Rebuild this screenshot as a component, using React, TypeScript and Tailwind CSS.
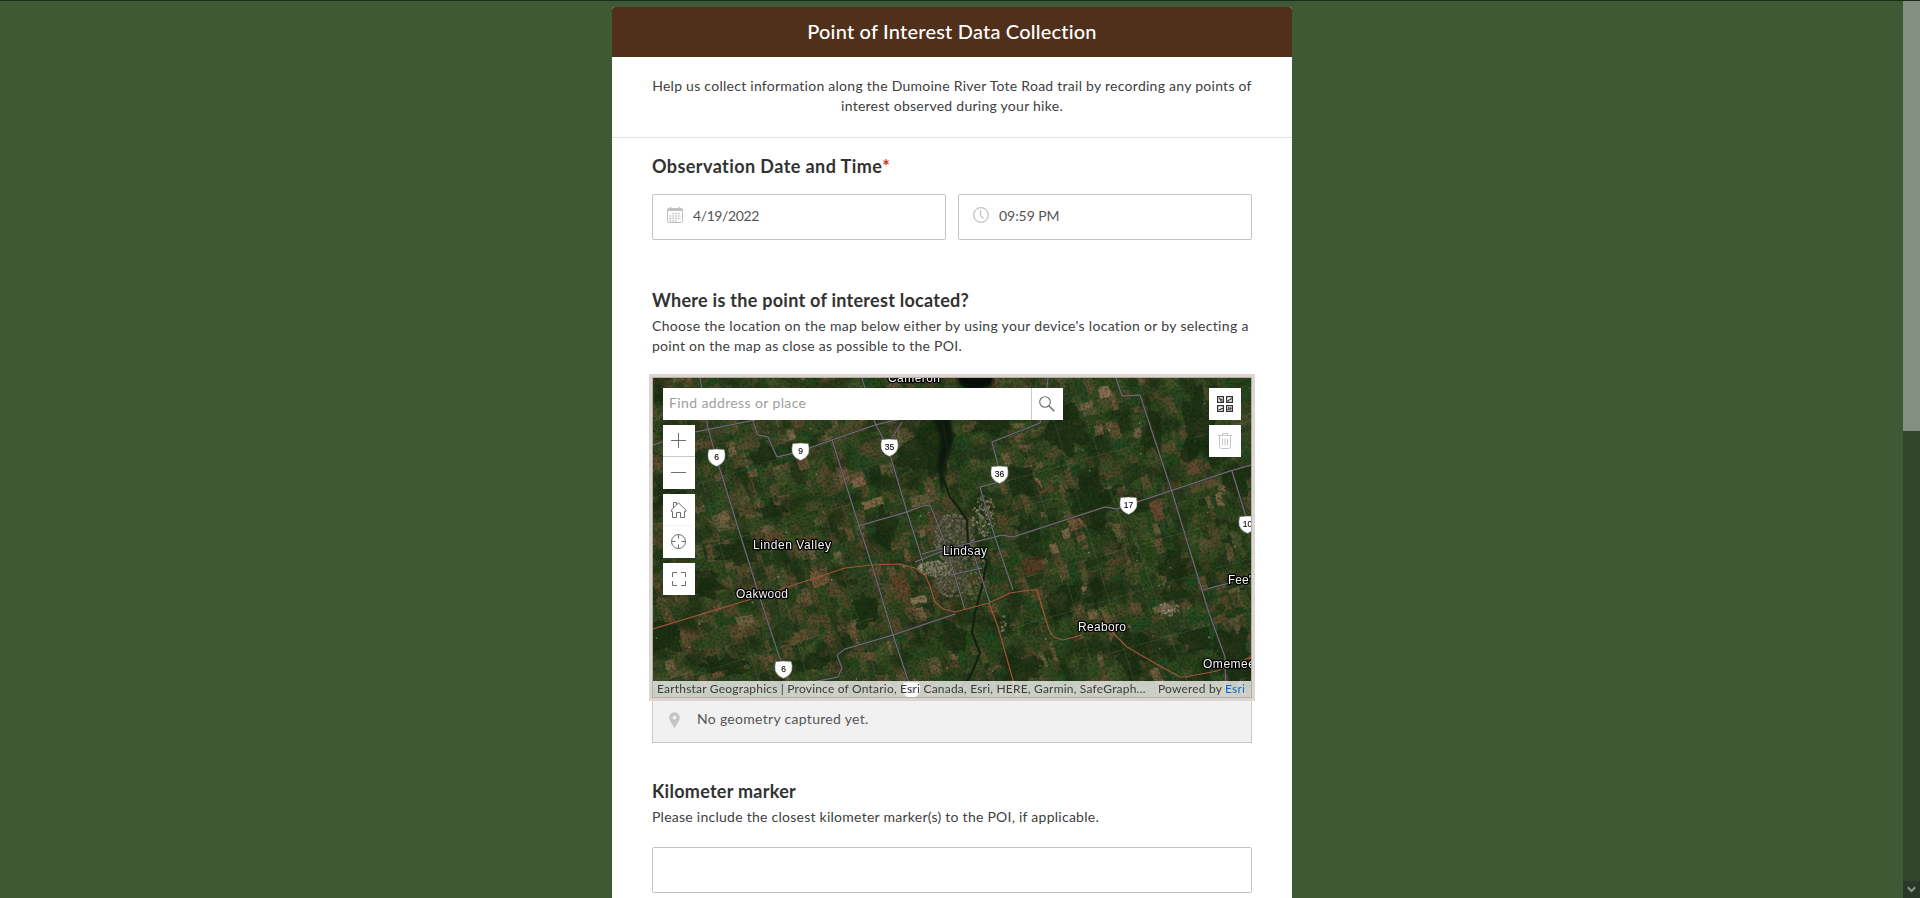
import type { ReactNode } from "react";

const MAP_W = 598;
const MAP_H = 319;

function createRandom(seed: number) {
  let s = seed;
  return () => {
    s = (s * 1664525 + 1013904223) % 4294967296;
    return s / 4294967296;
  };
}

type Patch = { d: string; fill: string; opacity: number };

const GREENS = ["#253a1c", "#2c451c", "#334f20", "#244719", "#3d4f26", "#44552a", "#1e3316", "#30421f", "#1e4a21", "#384a24"];
const BROWNS = ["#5d4a2d", "#6a5337", "#53472a", "#72583c", "#605131", "#624930"];
const TANS = ["#84694b", "#8c7051", "#7b6546"];

function buildFields(): Patch[] {
  const rand = createRandom(20417);
  const pick = (list: string[]) => list[Math.floor(rand() * list.length)];
  const patches: Patch[] = [];
  const blockW = 30;
  const blockH = 25;
  for (let by = -200; by < 520; by += blockH) {
    for (let bx = -120; bx < 720; bx += blockW) {
      const vertical = rand() > 0.35;
      let pos = 0;
      const span = vertical ? blockW : blockH;
      while (pos < span) {
        const size = 4 + rand() * 8;
        let along = 0;
        const length = vertical ? blockH : blockW;
        while (along < length) {
          const step = 6 + rand() * 15;
          const x = bx + (vertical ? pos : along);
          const y = by + (vertical ? along : pos);
          const w = Math.min(vertical ? size : step, blockW);
          const h = Math.min(vertical ? step : size, blockH);
          const worldX = x * 0.956 + y * 0.292;
          const brownShare = worldX < 300 ? 0.36 : 0.25;
          const r = rand();
          if (r < 0.92) {
            const fill = r < 0.05 ? pick(TANS) : r < brownShare ? pick(BROWNS) : pick(GREENS);
            const j = () => (rand() - 0.5) * 1.8;
            patches.push({
              d: `M${(x + j()).toFixed(1)} ${(y + j()).toFixed(1)}L${(x + w + j()).toFixed(1)} ${(y + j()).toFixed(1)}L${(x + w + j()).toFixed(1)} ${(y + h + j()).toFixed(1)}L${(x + j()).toFixed(1)} ${(y + h + j()).toFixed(1)}Z`,
              fill,
              opacity: 0.35 + rand() * 0.5,
            });
          }
          along += step;
        }
        pos += size;
      }
    }
  }
  return patches;
}

function buildBlob(cx: number, cy: number, rx: number, ry: number, seed: number) {
  const rand = createRandom(seed);
  const pts: string[] = [];
  for (let i = 0; i < 18; i++) {
    const a = (i / 18) * Math.PI * 2;
    const k = 0.5 + rand() * 0.65;
    pts.push(`${(cx + Math.cos(a) * rx * k).toFixed(1)},${(cy + Math.sin(a) * ry * k).toFixed(1)}`);
  }
  return pts.join(" ");
}

const FORESTS: [number, number, number, number][] = [
  [284, 68, 20, 34], [262, 78, 22, 20], [110, 79, 22, 12], [15, 109, 22, 14], [86, 175, 26, 15], [51, 205, 24, 16],
  [12, 259, 22, 20], [212, 232, 15, 20], [232, 150, 14, 24], [368, 102, 20, 24], [376, 155, 15, 18], [439, 122, 30, 32],
  [545, 48, 22, 46], [500, 55, 14, 24], [478, 275, 22, 24], [368, 290, 26, 16], [521, 189, 16, 24], [582, 275, 20, 34],
  [415, 52, 22, 26], [160, 285, 20, 10], [70, 288, 26, 12], [30, 20, 28, 12], [410, 222, 16, 22], [300, 260, 16, 20],
  [585, 100, 16, 18], [120, 132, 18, 10], [340, 40, 26, 22], [440, 215, 10, 16], [545, 262, 20, 14],
];

const DIRT: [number, number, number, number, string][] = [
  [247, 208, 12, 18, "#60442a"], [220, 125, 16, 6, "#8d6e4a"], [167, 200, 13, 12, "#7b5a3c"], [205, 105, 10, 6, "#87694c"],
  [380, 187, 14, 12, "#593c27"], [427, 145, 16, 8, "#7c5b3e"], [452, 14, 9, 8, "#94745a"], [383, 106, 6, 8, "#86654a"],
  [540, 88, 9, 12, "#6b4c33"], [504, 132, 8, 14, "#704a34"], [435, 213, 8, 7, "#8b6f55"], [405, 220, 12, 7, "#7c6247"],
  [515, 230, 10, 8, "#897158"], [195, 250, 14, 10, "#755a40"], [92, 243, 12, 8, "#75643f"], [130, 130, 9, 12, "#695039"],
  [150, 85, 8, 10, "#6d4e38"], [100, 95, 7, 6, "#755b3e"], [190, 95, 7, 10, "#7a5c47"], [265, 222, 11, 5, "#917c5b"],
];

const ROADS = [
  "M47 0 55 50 63 79 107 220 125 275 135 302 140 319",
  "M209 0 222 45 235 70 254 134 270 184",
  "M179 62 205 145 219 187 240 257 255 302 261 319",
  "M0 67 42 54 102 42",
  "M95 30 102 49 105 57 115 59 124 79 145 74 179 62 222 47 252 40",
  "M205 148 254 134 269 128 277 127 282 139 292 165 312 232",
  "M239 60 249 44",
  "M150 306 185 299 189 290 184 277 192 271 240 257 302 236",
  "M395 0 394 9 387 45 339 64 345 87 346 104 327 109 329 117 342 159 360 212",
  "M262 184 297 170 342 159 348 157 360 159 452 129 464 131 475 127 577 93 598 87",
  "M463 0 469 18 487 17 519 114 555 232 572 279 573 319",
  "M579 93 593 139",
  "M550 212 580 204",
  "M317 165 337 225",
  "M297 197 329 190",
  "M269 176 297 168",
];

const MINOR_ROADS = [
  "M20 0 110 319", "M78 30 160 319", "M150 70 230 319", "M370 60 440 290", "M400 40 480 300", "M430 30 500 240",
  "M350 104 480 68", "M0 120 180 64", "M0 185 205 124", "M0 310 220 240", "M370 200 560 146", "M360 250 598 180",
  "M470 130 540 319", "M540 60 598 42", "M440 280 598 235", "M330 140 400 120",
];

const RED_ROADS = [
  "M0 251 92 223 165 199 192 190 219 187 245 186 262 190 272 197 277 208 282 224 290 231 302 234 336 225 357 215 377 212 384 212 389 229 396 252 401 259 410 262 429 257",
  "M459 254 474 269 500 284 527 299 532 299 564 293 598 279",
  "M336 225 345 249 360 302 364 319",
];

const SHIELDS: [number, number, string][] = [
  [63, 79, "6"], [147, 73, "9"], [236, 69, "35"], [346, 96, "36"], [475, 127, "17"], [594, 146, "10"], [130, 291, "6"], [258, 312, "6"],
];

const PLACES: [number, number, string, number][] = [
  [235, 4, "Cameron", 52], [100, 171, "Linden Valley", 78], [290, 177, "Lindsay", 44], [83, 220, "Oakwood", 52],
  [425, 253, "Reaboro", 48], [575, 206, "Fee's", 29], [550, 290, "Omemee", 52],
];

function buildTown() {
  const rand = createRandom(77);
  const dots: { x: number; y: number; s: number; fill: string; o: number }[] = [];
  const clusters: [number, number, number, number, number, boolean][] = [
    [300, 160, 20, 26, 520, false], [330, 137, 12, 21, 170, true], [282, 190, 19, 8, 240, true], [298, 203, 18, 15, 220, false],
    [320, 195, 15, 28, 120, false], [350, 247, 4, 14, 18, true], [515, 230, 10, 8, 40, true],
  ];
  const muted = ["#77735e", "#666451", "#85806c", "#585845", "#6c6755"];
  const bright = ["#a39c88", "#877f6c", "#b9b09d", "#6f6856", "#938975"];
  clusters.forEach(([cx, cy, rx, ry, n, isBright]) => {
    for (let i = 0; i < n; i++) {
      const a = rand() * Math.PI * 2;
      const k = Math.sqrt(rand());
      const shades = isBright ? bright : muted;
      dots.push({ x: cx + Math.cos(a) * rx * k, y: cy + Math.sin(a) * ry * k, s: 1 + rand() * 1.4, fill: shades[Math.floor(rand() * 5)], o: 0.4 + rand() * 0.4 });
    }
  });
  for (let i = 0; i < 120; i++) {
    dots.push({ x: rand() * MAP_W, y: rand() * MAP_H, s: 0.8 + rand() * 0.8, fill: "#a8a888", o: 0.45 + rand() * 0.35 });
  }
  return dots;
}

const fields = buildFields();
const town = buildTown();

function SatelliteMap() {
  return (
    <svg className="block h-full w-full" viewBox={`0 0 ${MAP_W} ${MAP_H}`} preserveAspectRatio="none">
      <defs>
        <filter id="soft" x="-20%" y="-20%" width="140%" height="140%" colorInterpolationFilters="sRGB">
          <feGaussianBlur stdDeviation="1.6" />
        </filter>
        <filter id="warp" x="0" y="0" width="100%" height="100%" colorInterpolationFilters="sRGB">
          <feTurbulence type="fractalNoise" baseFrequency="0.07" numOctaves="2" seed="4" />
          <feDisplacementMap in="SourceGraphic" scale="5" xChannelSelector="R" yChannelSelector="G" result="w" />
          <feGaussianBlur in="w" stdDeviation="0.35" />
        </filter>
        <filter id="shade" x="0" y="0" width="100%" height="100%" colorInterpolationFilters="sRGB">
          <feTurbulence type="fractalNoise" baseFrequency="0.035" numOctaves="5" seed="11" />
          <feColorMatrix values="0 0 0 0 0.09  0 0 0 0 0.17  0 0 0 0 0.06  5 0 0 0 -2.6" />
          <feComponentTransfer><feFuncA type="linear" slope="0.6" /></feComponentTransfer>
        </filter>
        <filter id="grain" x="0" y="0" width="100%" height="100%" colorInterpolationFilters="sRGB">
          <feTurbulence type="fractalNoise" baseFrequency="0.4" numOctaves="2" seed="2" />
          <feColorMatrix values="0 0 0 0 0.05  0 0 0 0 0.09  0 0 0 0 0.03  0 1.1 0 0 -0.45" />
        </filter>
      </defs>
      <rect width={MAP_W} height={MAP_H} fill="#324522" />
      <g filter="url(#warp)">
        <rect width={MAP_W} height={MAP_H} fill="#324522" />
        <g transform="rotate(-17)">
          {fields.map((f, i) => (
            <path key={i} d={f.d} fill={f.fill} opacity={f.opacity} />
          ))}
        </g>
        {DIRT.map(([x, y, rx, ry, fill], i) => (
          <rect key={i} x={x - rx * 0.7} y={y - ry * 0.7} width={rx * 1.4} height={ry * 1.4} fill={fill} opacity="0.85" transform={`rotate(-17 ${x} ${y})`} />
        ))}
        {FORESTS.map(([x, y, rx, ry], i) => (
          <polygon key={i} points={buildBlob(x, y, rx, ry, 31 + i * 17)} fill="#192d12" opacity="0.75" />
        ))}
      </g>
      <rect width={MAP_W} height={MAP_H} filter="url(#shade)" />
      <g filter="url(#soft)">
        <path d="M304 -4H341L338 8 318 14 306 6Z" fill="#060d0b" />
        <path d="M280 40H298L300 62 292 90 290 120 284 90 288 62Z" fill="#0a160d" opacity=".9" />
        <ellipse cx="302" cy="160" rx="20" ry="26" fill="#4b4a38" opacity=".75" />
        <ellipse cx="298" cy="199" rx="20" ry="15" fill="#524c39" opacity=".6" />
      </g>
      {MINOR_ROADS.map((d) => (
        <path key={d} d={d} fill="none" stroke="#7c8467" strokeWidth=".5" opacity=".5" />
      ))}
      {town.map((t, i) => (
        <rect key={i} x={t.x} y={t.y} width={t.s} height={t.s} fill={t.fill} opacity={t.o} />
      ))}
      <path d="M290 45 295 75 288 95 297 119 305 129 314 142 315 167 334 182 329 209 322 235 319 255 327 275 317 299 300 319" fill="none" stroke="#14230f" strokeWidth="2.200" strokeLinejoin="round" />
      <rect width={MAP_W} height={MAP_H} filter="url(#grain)" />
      {ROADS.map((d) => (
        <path key={d} d={d} fill="none" stroke="#3a393a" strokeWidth="2" strokeLinejoin="round" />
      ))}
      {ROADS.map((d) => (
        <path key={d} d={d} fill="none" stroke="#7a7878" strokeWidth=".9" strokeLinejoin="round" />
      ))}
      {RED_ROADS.map((d) => (
        <path key={d} d={d} fill="none" stroke="#a3543a" strokeWidth="1.200" strokeLinejoin="round" />
      ))}
      {SHIELDS.map(([x, y, label], i) => (
        <g key={i} transform={`translate(${x + 0.5} ${y + 0.5})`}>
          <path d="M-8 -8Q0 -9.200 8 -8Q9.200 -3 8.400 1.500Q6 7 0 9Q-6 7 -8.400 1.500Q-9.200 -3 -8 -8Z" fill="#fff" stroke="#56594e" strokeWidth=".6" />
          <text y="2.300" textAnchor="middle" fontSize="8.500" fontFamily="Liberation Sans, sans-serif" fill="#111" stroke="#111" strokeWidth=".15">{label}</text>
        </g>
      ))}
      {PLACES.map(([x, y, name, w]) => (
        <text key={name} x={x} y={y} textLength={w} fontSize="12" fontFamily="Liberation Sans, sans-serif" fill="#f4f4f4" stroke="#000" strokeWidth="2.600" strokeLinejoin="round" paintOrder="stroke">{name}</text>
      ))}
    </svg>
  );
}

function MapButton({ children, className = "" }: { children: ReactNode; className?: string }) {
  return <button className={`flex h-8 w-8 items-center justify-center bg-white text-[#6e6e6e] ${className}`}>{children}</button>;
}

const line = { fill: "none", stroke: "currentColor", strokeWidth: 1 };

function PlusIcon() {
  return <svg className="size-4" viewBox="0 0 16 16" {...line}><path d="M0 7.500H15M7.500 0V15" /></svg>;
}
function MinusIcon() {
  return <svg className="size-4" viewBox="0 0 16 16" {...line}><path d="M0 7.500H15" /></svg>;
}
function HomeIcon() {
  return <svg className="size-4" viewBox="0 0 16 16" {...line}><path d="M2.500 6V.5H5.500V3M.5 8 7.500.9 14.800 8V9.500H13.500V15.500H9.500V10.500H5.500V15.500H1.500V9.500H.5Z" /></svg>;
}
function LocateIcon() {
  return <svg className="size-4" viewBox="0 0 16 16" {...line}><circle cx="7.500" cy="7.500" r="7" /><path d="M7.500 .5V4.500M7.500 10.500V14.500M.5 7.500H4.500M10.500 7.500H14.500" /></svg>;
}
function ExpandIcon() {
  return <svg className="size-4" viewBox="0 0 16 16" {...line}><path d="M1.500 6V1.500H6M10 1.500H14.500V6M14.500 10V14.500H10M6 14.500H1.500V10" /></svg>;
}
function SearchIcon() {
  return <svg className="mr-[2px] size-4" viewBox="0 0 16 16" {...line} strokeWidth={1.1}><circle cx="6" cy="6" r="5.300" /><path d="M9.800 9.800 15.300 15.300" strokeWidth="1.500" /></svg>;
}
function BasemapIcon() {
  return (
    <svg className="size-4 text-[#333]" viewBox="0 0 16 16" {...line} strokeWidth={1.2}>
      <path d="M.6.6H6.400V6.400H.6ZM9.600.6H15.400V6.400H9.600ZM.6 9.600H6.400V15.400H.6ZM9.600 9.600H15.400V15.400H9.600Z" />
      <path d="M2 2 3.500 3.500M3.500 5 4 3.500 5.500 3M5 4.500V6M10.500 5.500 12 4 13.500 3.500 14.500 2M1.500 13.500H3.500L4.500 12.500H6M10.500 14 12 12.500 11.500 11M13 11.500 14.500 13M13 14.500V13" />
    </svg>
  );
}
function TrashIcon() {
  return <svg className="size-4 text-[#c6c6c6]" viewBox="0 0 16 16" {...line}><path d="M1 2.500H15M5.500 2.500V.5H10.500V2.500M2.500 3V13.500Q2.500 15.500 4.500 15.500H11.500Q13.500 15.500 13.500 13.500V3M5.500 5.500V12.500M8 5.500V12.500M10.500 5.500V12.500" /></svg>;
}
function CalendarIcon() {
  return (
    <svg className="size-4 text-[#c0c0c0]" viewBox="0 0 16 16" {...line}>
      <rect x=".5" y="1.500" width="15" height="14" rx="1" />
      <path d="M1 3H15" strokeWidth="2" />
      <path d="M3.500 0V3M12.500 0V3" strokeWidth="1.500" />
      <path d="M5.500 6.500H14M2.500 9H14M2.500 11.500H14M2.500 14H10" strokeWidth="1.400" strokeDasharray="1.600 1.200" />
    </svg>
  );
}
function ClockIcon() {
  return <svg className="size-4 text-[#c3c3c3]" viewBox="0 0 16 16" {...line} strokeWidth={1.3}><circle cx="8" cy="8" r="7.300" /><path d="M7.500 3V8.500L10.500 11.500" /></svg>;
}
function PinIcon() {
  return <svg className="-mt-[2px] h-[17px] w-[11px] text-[#c5c5c5]" viewBox="0 0 11 17" fill="currentColor"><path fillRule="evenodd" d="M5.500.3A5.300 5.300 0 0 0 .2 5.600C.2 9.500 4 12.500 5.500 16.700 7 12.500 10.800 9.500 10.800 5.600A5.300 5.300 0 0 0 5.500.3ZM5.500 3.700A1.900 1.900 0 1 1 5.500 7.500 1.900 1.900 0 0 1 5.500 3.700Z" /></svg>;
}

function MapView() {
  return (
    <div className="relative h-[321px] overflow-hidden border border-[#b5aea5] outline-3 outline-[#ddd5d1]">
      <SatelliteMap />
      <div className="absolute inset-x-[10px] top-[10px] flex items-start justify-between">
        <div className="flex flex-col gap-[5px]">
          <div className="flex h-8 w-[400px] bg-white">
            <div className="flex flex-1 items-center pb-[3px] pl-[6px] text-[14px] tracking-[0.38px] text-[#9e9e9e]">Find address or place</div>
            <MapButton className="border-l border-[#c8c8c8]"><SearchIcon /></MapButton>
          </div>
          <div className="flex w-8 flex-col">
            <MapButton className="border-b border-[#c8c8c8]"><PlusIcon /></MapButton>
            <MapButton><MinusIcon /></MapButton>
          </div>
          <div className="flex w-8 flex-col">
            <MapButton className="border-b border-[#f4f4f4]"><HomeIcon /></MapButton>
            <MapButton><LocateIcon /></MapButton>
          </div>
          <MapButton><ExpandIcon /></MapButton>
        </div>
        <div className="flex flex-col gap-[5px]">
          <MapButton><BasemapIcon /></MapButton>
          <MapButton><TrashIcon /></MapButton>
        </div>
      </div>
      <div className="absolute inset-x-0 bottom-0 flex h-4 items-center justify-between bg-white/75 pr-[6px] pl-[4px] text-[12px] leading-4 whitespace-nowrap text-[#3c3c3c]">
        <span className="tracking-[0.2px]">Earthstar Geographics | Province of Ontario, Esri Canada, Esri, HERE, Garmin, SafeGraph…</span>
        <span className="tracking-[0.18px]">Powered by <span className="text-[#0a6cc4]">Esri</span></span>
      </div>
    </div>
  );
}

function Question({ title, required, children, className = "" }: { title: ReactNode; required?: boolean; children: ReactNode; className?: string }) {
  return (
    <section className={className}>
      <h2 className="pb-px text-[18px] leading-6 font-bold tracking-[0.27px] text-[#323232]">
        {title}
        {required && <span className="text-[#c23b22]">*</span>}
      </h2>
      {children}
    </section>
  );
}

export default function App() {
  return (
    <div className="flex h-[898px] overflow-hidden border-t border-[#1a2c14] bg-[#3f5934] font-['Lato','Open_Sans',sans-serif]">
      <main className="flex flex-1 justify-center pt-1.5 pl-[1px]">
        <article className="h-[900px] w-[680px] shrink-0 rounded-t-[3px] bg-white">
          <header className="flex h-[50px] items-center justify-center rounded-t-[3px] bg-[#50301a] pb-[2px]">
            <h1 className="text-[20px] font-medium tracking-[0.2px] text-white">Point of Interest Data Collection</h1>
          </header>
          <div className="h-[81px] border-b border-[#dfdfdf] pt-[19px] text-center text-[14px] leading-5 tracking-[0.265px] text-[#404040]">
            <p>Help us collect information along the Dumoine River Tote Road trail by recording any points of<br />interest observed during your hike.</p>
          </div>
          <div className="px-10 pt-[16px]">
            <Question title={<span className="tracking-[0.42px]">Observation Date and Time</span>} required>
              <div className="mt-[15px] grid grid-cols-2 gap-3">
                <div className="flex h-[46px] items-center gap-[10px] rounded-[2px] border border-[#c4c4c4] pb-[3px] pl-[14px] text-[14px] text-[#555]">
                  <span className="-mt-[2px]"><CalendarIcon /></span>
                  <span className="tracking-[-0.4px]">4/19/2022</span>
                </div>
                <div className="flex h-[46px] items-center gap-[10px] rounded-[2px] border border-[#c4c4c4] pb-[3px] pl-[14px] text-[14px] text-[#555]">
                  <span className="-mt-[2px]"><ClockIcon /></span>
                  <span className="tracking-[-0.05px]">09:59 PM</span>
                </div>
              </div>
            </Question>
            <Question title="Where is the point of interest located?" className="mt-[48px]">
              <p className="mt-[3px] mb-[21px] text-[14px] leading-5 tracking-[0.26px] text-[#404040]">
                <span className="tracking-[0.31px]">Choose the location on the map below either by using your device's location or by selecting a</span><br />point on the map as close as possible to the POI.
              </p>
              <MapView />
              <div className="flex h-[45px] items-center gap-[17px] border border-t-0 border-[#c9c9c9] bg-[#f1f1f1] pt-[3px] pl-4 text-[14px] tracking-[0.3px] text-[#555]">
                <PinIcon />
                <span className="-mt-1.5">No geometry captured yet.</span>
              </div>
            </Question>
            <Question title="Kilometer marker" className="mt-[36px]">
              <p className="mt-[3px] text-[14px] leading-5 tracking-[0.255px] text-[#404040]">Please include the closest kilometer marker(s) to the POI, if applicable.</p>
              <div className="mt-5 h-[46px] rounded-[2px] border border-[#c4c4c4]" />
            </Question>
          </div>
        </article>
      </main>
      <aside className="flex w-[17px] flex-col bg-[#30452c]">
        <div className="h-[430px] bg-[#838f81]" />
        <div className="mt-auto flex h-[17px] items-center justify-center bg-[#293829] text-[#8b968a]">
          <svg className="h-[7px] w-[9px]" viewBox="0 0 9 7" fill="none" stroke="currentColor" strokeWidth="2"><path d="M.8 1.200 4.500 5 8.200 1.200" /></svg>
        </div>
      </aside>
    </div>
  );
}
